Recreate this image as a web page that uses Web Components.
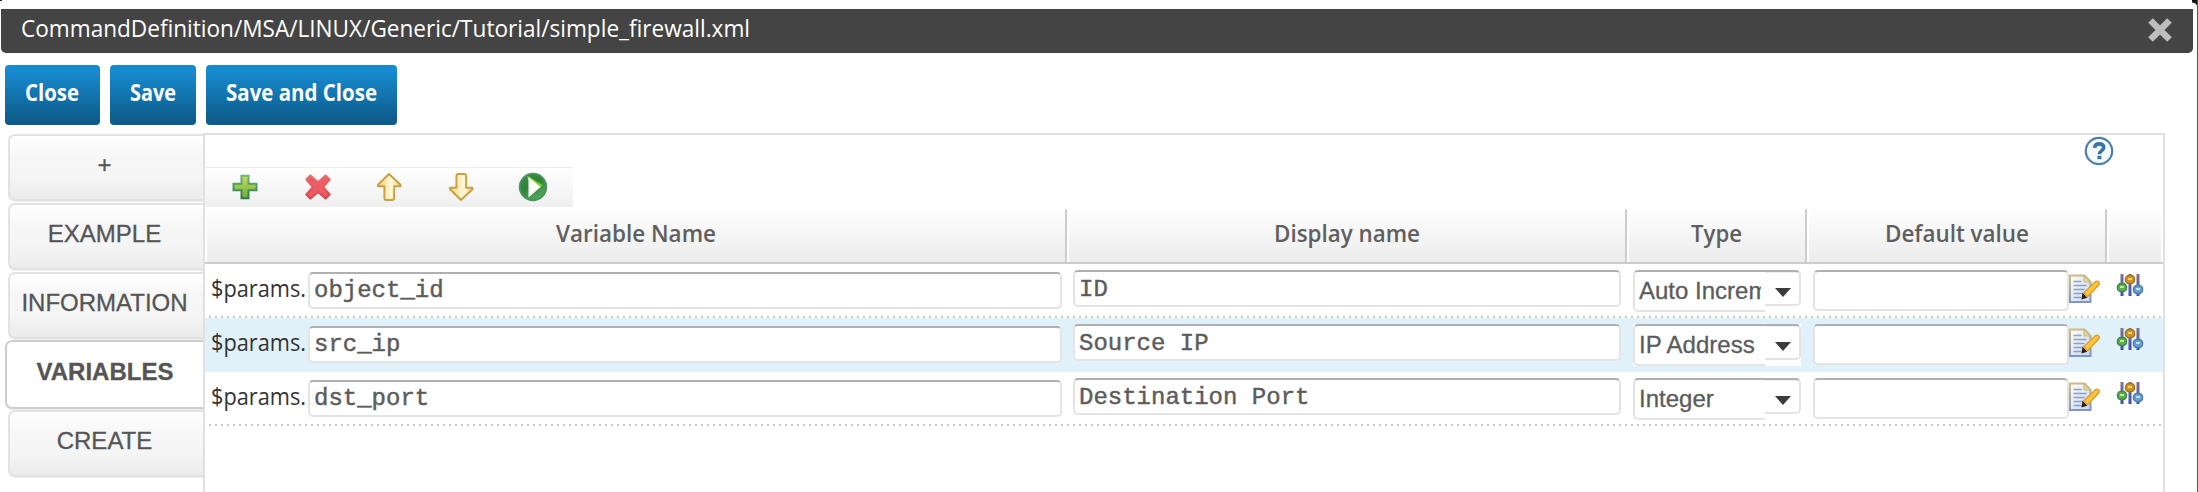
<!DOCTYPE html>
<html lang="en"><head><meta charset="utf-8"><title>simple_firewall.xml</title>
<style>html,body{margin:0;height:100%;overflow:hidden;background:#fff}</style></head>
<body><editor-window></editor-window>
<script>
const define = (name, html, after) => customElements.define(name, class extends HTMLElement {
  connectedCallback() {
    if (this.shadowRoot) return;
    const t = document.createElement('template');
    t.innerHTML = typeof html === 'function' ? html(this) : html;
    this.attachShadow({mode: 'open'}).append(t.content.cloneNode(true));
    if (after) after(this);
  }
});

/* Text squeezed or stretched to a given width */
define('fit-text', `<style>:host{display:block;flex:none;white-space:pre;overflow:visible}
span{display:inline-block;transform-origin:0 50%;white-space:pre}</style><span><slot></slot></span>`, el => {
  const w = +el.getAttribute('w'), s = el.shadowRoot.querySelector('span');
  el.style.width = w + 'px';
  s.style.transform = `scaleX(${w / s.getBoundingClientRect().width})`;
});

const icons = {
  close: [28, 28, `<path d="M4.500 4.500 23.500 23.500M23.500 4.500 4.500 23.500" stroke="#bdbebf" stroke-width="6.6"/>`],
  help: [30, 30, `<circle cx="15" cy="15" r="13.2" fill="#f4f9fd" stroke="#4f80ad" stroke-width="2.2"/><path d="M10.6 11.8C10.8 8.6 12.6 7.9 15 7.9c2.8 0 4.700 1.300 4.700 3.700 0 3.300-4.300 3.300-4.300 6.600" fill="none" stroke="#3e74a5" stroke-width="3.6"/><rect x="13.400" y="19.800" width="4" height="3.400" fill="#3e74a5"/>`],
  add: [28, 28, `<defs><linearGradient id="a" x2="0" y2="1"><stop stop-color="#c6dd60"/><stop offset="1" stop-color="#72ac35"/></linearGradient><linearGradient id="b" x2="0" y2="1"><stop stop-color="#69b878"/><stop offset="1" stop-color="#2c7a4a"/></linearGradient></defs><path d="M10.500 2.800h7v8h8v6.500h-8v8h-7v-8h-8v-6.500h8z" fill="url(#a)" stroke="url(#b)" stroke-width="2"/>`],
  del: [28, 28, `<defs><linearGradient id="a" x2="0" y2="1"><stop stop-color="#e0706c"/><stop offset=".5" stop-color="#e45a60"/><stop offset="1" stop-color="#d8424f"/></linearGradient></defs><path d="M6.400 2.600 14 9.300l7.600-6.700 4 4-6.600 7.400 6.600 7.500-4 4-7.600-6.700-7.600 6.700-4-4L9 14 2.400 6.600z" fill="#ed5c64" stroke="url(#a)" stroke-width="2.200" stroke-linejoin="round"/>`],
  up: [28, 30, `<defs><linearGradient id="a"><stop stop-color="#f9d370"/><stop offset=".6" stop-color="#fff8dc"/><stop offset="1" stop-color="#f5d27a"/></linearGradient></defs><path d="M14 2 25.500 12.800v1.500h-6.300V26q0 2-2 2h-5.800q-2 0-2-2V14.300H3v-1.500z" fill="url(#a)" stroke="#c6a044" stroke-width="1.900" stroke-linejoin="round"/>`],
  down: [28, 30, `<defs><linearGradient id="a"><stop stop-color="#f9d370"/><stop offset=".6" stop-color="#fff8dc"/><stop offset="1" stop-color="#f5d27a"/></linearGradient></defs><path d="M14 28 25.500 17.200v-1.500h-6.300V4q0-2-2-2h-5.800q-2 0-2 2v11.700H3v1.500z" fill="url(#a)" stroke="#c6a044" stroke-width="1.900" stroke-linejoin="round"/>`],
  run: [30, 30, `<defs><linearGradient id="a" x2=".6" y2="1"><stop stop-color="#3d8c50"/><stop offset=".5" stop-color="#2f8238"/><stop offset="1" stop-color="#56a85c"/></linearGradient></defs><circle cx="15" cy="15" r="13.200" fill="url(#a)" stroke="#46945c" stroke-width="2"/><path d="M9 3.500 24.500 13l-2 2.500L10 8z" fill="#7cd22c"/><path d="M10.500 5 22.500 15 10.500 25.500z" fill="#fff"/>`],
  edit: [32, 30, `<defs><linearGradient id="a" x2="1" y2="1"><stop stop-color="#fffef6"/><stop offset="1" stop-color="#c8d6ee"/></linearGradient><linearGradient id="b" x2=".2" y2="1"><stop stop-color="#cdbf83"/><stop offset="1" stop-color="#8095c4"/></linearGradient></defs><path d="M1 1.500h14.500L21.500 8v20H1z" fill="url(#a)" stroke="url(#b)" stroke-width="2"/><path d="M15 1.500V8h6.500z" fill="#e6d494" stroke="#c9b779"/><path d="M4.500 7.500h8M4.500 11.500h13M4.500 15.500h11M4.500 19.500h9M4.500 23.500h8" stroke="#8aa0cc" stroke-width="1.500"/><path d="m13.500 18.500 4.700 5.300-5.700 1.700z" fill="#2b1e18"/><path d="m14.800 18.700 11-10.500q2.500-2 4 0 1.300 1.500-.5 3.200L18.500 22.700z" fill="#fbc834" stroke="#dba03a" stroke-width="1.500"/>`],
  tune: [28, 26, `<defs><linearGradient id="p" gradientUnits="userSpaceOnUse" x1="0" y1="0" x2="0" y2="24"><stop stop-color="#8b7484"/><stop offset="1" stop-color="#3a4bbd"/></linearGradient></defs><g fill="url(#p)"><rect x="4.500" y="1" width="3" height="22"/><rect x="12.500" y="1" width="3" height="22"/><rect x="20.500" y="1" width="3" height="22"/></g><g stroke-width="1.500"><rect x="1.500" y="10.500" width="9" height="8" rx="3.500" fill="#5dab55" stroke="#3e8a4a"/><rect x="9.500" y="2.500" width="9" height="8" rx="3.500" fill="#cf9722" stroke="#a5761e"/><rect x="17.500" y="12.500" width="9" height="8" rx="3.500" fill="#6aa2cf" stroke="#4a7cae"/></g><path d="M4 14h4" stroke="#c8ea84" stroke-width="2"/><path d="M12 6h4" stroke="#f3d168" stroke-width="2"/><path d="M20 16h4" stroke="#b7e0f2" stroke-width="2"/>`]
};
define('ui-icon', el => {
  const [w, h, body] = icons[el.getAttribute('name')];
  return `<style>:host{display:block;flex:none;width:${w}px;height:${h}px}svg{display:block}</style><svg width="${w}" height="${h}" viewBox="0 0 ${w} ${h}">${body}</svg>`;
});

define('title-bar', `<style>:host{display:flex;box-sizing:border-box;height:44px;margin:9px 4px 0 1px;padding:0 19px 0 20px;background:#444;border-radius:0 0 5px 5px;justify-content:space-between;color:#fff;font:24px/37px "Open Sans",sans-serif}
ui-icon{margin-top:7px}</style><fit-text w="729"><slot></slot></fit-text><ui-icon name="close"></ui-icon>`);

define('push-button', el => `<style>:host{display:flex;justify-content:center;box-sizing:border-box;width:${el.getAttribute('w')}px;height:60px;padding-right:1px;border-radius:4px;background:linear-gradient(#178bd0 10%,#0d5c8b 92%);color:#fff;font:bold 23px/54px "Open Sans",sans-serif}</style><fit-text w="${el.getAttribute('tw')}"><slot></slot></fit-text>`);

define('side-tab', `<style>:host{display:flex;justify-content:center;box-sizing:border-box;height:67px;margin:0 0 2px 8px;padding-right:4px;border:2px solid #e2e2e2;border-right:0;border-radius:7px 0 0 7px;background:linear-gradient(#fff,#f6f6f6 35%,#f5f5f5 65%,#ebebeb);box-shadow:0 1px 1px #eee;color:#555;-webkit-text-stroke:.3px #555;font:24px/58px "Liberation Sans",Arial,sans-serif}
:host([active]){height:69px;margin:-1px -2px 1px 5px;padding-right:2px;background:#fff;border-color:#cecece;font-weight:bold;line-height:60px;position:relative}</style><slot></slot>`);

define('tool-bar', `<style>:host{display:flex;box-sizing:border-box;width:368px;height:40px;margin-top:32px;padding:5px 0 0 26px;gap:44px;border-top:1px solid #ececec;background:linear-gradient(#fff,#efefef)}
ui-icon[name=up],ui-icon[name=down],ui-icon[name=run]{margin-top:-1px}ui-icon[name=run]{margin-left:-1px}ui-icon[name=del]{margin:0 -1px 0 1px}</style>
<ui-icon name="add"></ui-icon><ui-icon name="del"></ui-icon><ui-icon name="up"></ui-icon><ui-icon name="down"></ui-icon><ui-icon name="run"></ui-icon>`);

define('column-head', el => `<style>:host{display:flex;justify-content:center;box-sizing:border-box;height:55px;padding-right:3px;border:solid #fff;border-width:0 0 0 2px;background:linear-gradient(#fff,#ececec);color:#5f5f5f;font:600 23px/52px "Open Sans",sans-serif;position:relative}
:host(:not([last]))::after{content:"";position:absolute;right:0;top:2px;bottom:0;width:2px;background:#ccc}</style>${el.hasAttribute('tw') ? `<fit-text w="${el.getAttribute('tw')}"><slot></slot></fit-text>` : ''}`);

define('text-field', `<style>:host{display:block;box-sizing:border-box;height:37px;padding-left:4px;border:2px solid #e4e4e4;border-top-color:#b0b0b0;border-radius:5px;background:#fff;color:#5c5c5c;-webkit-text-stroke:.45px #5c5c5c;font:24px/34px "Liberation Mono","Courier New",monospace;white-space:pre}
:host([tall]){height:41px}</style><slot></slot>`);

define('type-select', `<style>:host{display:flex;align-items:flex-start;width:168px;height:42px;background:#fff;color:#5c5c5c;-webkit-text-stroke:.3px #5c5c5c;font:24px/38px "Liberation Sans",Arial,sans-serif}
.v{box-sizing:border-box;width:132px;height:42px;padding:0 4px;border:2px solid #e4e4e4;border-top-color:#b0b0b0;border-right:0;border-radius:5px 0 0 5px}
.v div{overflow:hidden;white-space:pre}
.a{box-sizing:border-box;width:36px;height:36px;border:2px solid #e4e4e4;border-top-color:#b0b0b0;border-left:0;border-radius:0 5px 5px 0;box-shadow:inset 0 1px #eee}
svg{display:block;margin:16px 0 0 10px}</style><div class="v"><div><slot></slot></div></div><div class="a"><svg width="16" height="9"><path d="M0 0h16L8 9z" fill="#3c3c3c"/></svg></div>`);

define('variable-row', el => `<style>:host{display:grid;grid-template-columns:860px 560px 180px 300px 58px;box-sizing:border-box;height:54px;align-items:start;font:23px/46px "Open Sans",sans-serif;color:#333;background:repeating-linear-gradient(90deg,#c9c9d3 0 2px,transparent 2px 6px) 4px 52px/100% 2px no-repeat}
:host([selected]){background:#e1f1fa}
div{display:flex;align-items:flex-start}
.n{padding-left:6px;gap:2px;line-height:42px}.n text-field{width:754px;margin-top:8px}
.n fit-text{margin-top:3px}
.d{padding:6px 0 0 8px}.d text-field{width:548px;line-height:35px}
.t{padding:6px 0 0 8px}
.v{padding:6px 0 0 8px}.v text-field{width:256px}.v ui-icon{margin-top:4px}
.s{padding:9px 0 0 11px}</style>
<div class="n"><fit-text w="95">$params.</fit-text><text-field>${el.getAttribute('var')}</text-field></div>
<div class="d"><text-field>${el.getAttribute('label')}</text-field></div>
<div class="t"><type-select>${el.getAttribute('type')}</type-select></div>
<div class="v"><text-field tall></text-field><ui-icon name="edit"></ui-icon></div>
<div class="s"><ui-icon name="tune"></ui-icon></div>`);

define('variable-table', `<style>:host{display:block}.h{display:grid;grid-template-columns:862px 560px 180px 300px 54px;border-bottom:2px solid #ccc}</style>
<div class="h"><column-head tw="160">Variable Name</column-head><column-head tw="146">Display name</column-head><column-head tw="51">Type</column-head><column-head tw="144">Default value</column-head><column-head last></column-head></div><slot></slot>`);

define('editor-window', `<style>:host{display:flex;flex-direction:column;box-sizing:border-box;height:492px;border-right:1px solid #555;background:#fff;overflow:hidden;position:relative}
.c{position:absolute;right:-1px;top:0;width:6px;height:40px;background:radial-gradient(circle at 0 8px,#fff 5px,#111 6px) 0 0/6px 8px no-repeat,linear-gradient(#111,#111) 5px 0/1px 40px no-repeat}
.l{position:absolute;left:0;top:0;width:2px;height:1px;background:#222}
.b{display:flex;gap:10px;padding:12px 0 0 5px}
.m{display:flex;flex:1;margin-top:8px}
nav{width:203px;flex:none;padding-top:1px}
main{box-sizing:border-box;width:1962px;border:2px solid #e0e0e0;border-bottom:0;position:relative}
.help{position:absolute;right:49px;top:1px}</style>
<title-bar>CommandDefinition/MSA/LINUX/Generic/Tutorial/simple_firewall.xml</title-bar><i class="c"></i><i class="l"></i>
<div class="b"><push-button w="95" tw="54">Close</push-button><push-button w="86" tw="46">Save</push-button><push-button w="191" tw="151">Save and Close</push-button></div>
<div class="m"><nav><side-tab>+</side-tab><side-tab>EXAMPLE</side-tab><side-tab>INFORMATION</side-tab><side-tab active>VARIABLES</side-tab><side-tab>CREATE</side-tab></nav>
<main><ui-icon class="help" name="help"></ui-icon><tool-bar></tool-bar>
<variable-table><variable-row var="object_id" label="ID" type="Auto Increment"></variable-row><variable-row selected var="src_ip" label="Source IP" type="IP Address"></variable-row><variable-row var="dst_port" label="Destination Port" type="Integer"></variable-row></variable-table></main></div>`);
</script></body></html>
